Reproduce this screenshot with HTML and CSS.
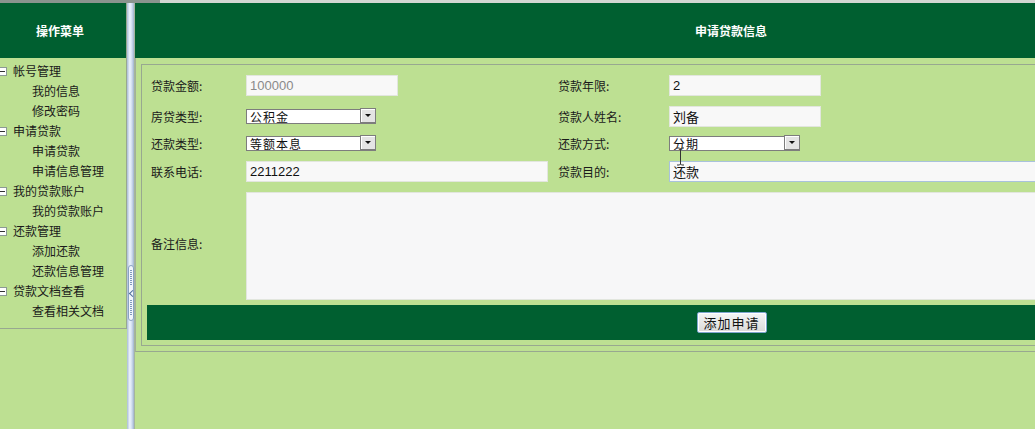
FILE: index.html
```html
<!DOCTYPE html>
<html lang="zh-CN">
<head>
    <meta charset="UTF-8">
    <title>申请贷款信息</title>
    <link rel="stylesheet" href="styles.css">
</head>
<body>
    <div class="topline"></div>
    <div class="frame">

        <!-- 左侧菜单 -->
        <div class="sidebar">
            <div class="side-box">
                <div class="side-head">操作菜单</div>
                <ul class="menu">
                    <li class="group"><span class="toggle"></span>帐号管理</li>
                    <li class="item">我的信息</li>
                    <li class="item">修改密码</li>
                    <li class="group"><span class="toggle"></span>申请贷款</li>
                    <li class="item">申请贷款</li>
                    <li class="item">申请信息管理</li>
                    <li class="group"><span class="toggle"></span>我的贷款账户</li>
                    <li class="item">我的贷款账户</li>
                    <li class="group"><span class="toggle"></span>还款管理</li>
                    <li class="item">添加还款</li>
                    <li class="item">还款信息管理</li>
                    <li class="group"><span class="toggle"></span>贷款文档查看</li>
                    <li class="item">查看相关文档</li>
                </ul>
            </div>
        </div>

        <!-- 分隔条 -->
        <div class="splitter">
            <div class="handle">
                <span class="dots"></span>
                <span class="chev"></span>
                <span class="dots"></span>
            </div>
        </div>

        <!-- 主区域 -->
        <div class="main">
            <div class="main-head">申请贷款信息</div>
            <div class="main-body">
                <form class="form">
                    <label>贷款金额:</label>
                    <div><input type="text" class="txt short muted" value="100000" readonly></div>
                    <label>贷款年限:</label>
                    <div><input type="text" class="txt short" value="2"></div>

                    <label>房贷类型:</label>
                    <div class="sel">
                        <select><option>公积金</option></select>
                        <span class="arrow"></span>
                    </div>
                    <label>贷款人姓名:</label>
                    <div><input type="text" class="txt short" value="刘备"></div>

                    <label>还款类型:</label>
                    <div class="sel">
                        <select><option>等额本息</option></select>
                        <span class="arrow"></span>
                    </div>
                    <label>还款方式:</label>
                    <div class="sel wide">
                        <select><option>分期</option></select>
                        <span class="arrow"></span>
                        <svg class="ibeam" width="9" height="19" viewBox="0 0 9 19">
                            <path d="M1 1h2.5l1 1 1-1H8M4.5 2v15M1 18h2.5l1-1 1 1H8" fill="none" stroke="#333" stroke-width="1"/>
                        </svg>
                    </div>

                    <label>联系电话:</label>
                    <div><input type="text" class="txt phone" value="2211222"></div>
                    <label>贷款目的:</label>
                    <div><input type="text" class="txt full focus" value="还款"></div>

                    <label class="note-label">备注信息:</label>
                    <textarea class="note"></textarea>

                    <div class="bar">
                        <button type="button">添加申请</button>
                    </div>
                </form>
            </div>
        </div>

    </div>
</body>
</html>
```
FILE: styles.css
```css
* {
    box-sizing: border-box;
}
body {
    margin: 0;
    background: #bde092;
    font-family: "Noto Sans CJK SC", "Liberation Sans", sans-serif;
    font-size: 12px;
    color: #1a1a1a;
    overflow: hidden;
}
.topline {
    height: 3px;
    background: linear-gradient(to right, #8a948e 0, #8a948e 160px, #d2d6d2 160px);
}
.frame {
    display: flex;
    height: 426px;
}

/* 左侧菜单 */
.sidebar {
    width: 127px;
    flex-shrink: 0;
}
.side-box {
    border-right: 1px solid #98a890;
    border-bottom: 1px solid #98a890;
}
.side-head {
    height: 55px;
    background: #005f30;
    color: #fff;
    font-weight: bold;
    display: flex;
    align-items: center;
    justify-content: center;
    padding-right: 6px;
}
.menu {
    list-style: none;
    margin: 0;
    padding: 3px 0 7px;
    overflow: hidden;
}
.menu li {
    height: 20px;
    line-height: 20px;
    white-space: nowrap;
}
.menu .group {
    display: flex;
    align-items: center;
}
.menu .item {
    padding-left: 32px;
}
.toggle {
    width: 9px;
    height: 9px;
    margin: 0 6px 0 -2px;
    border: 1px solid #8c9a94;
    background: #fff;
    position: relative;
}
.toggle::after {
    content: "";
    position: absolute;
    left: 1px;
    right: 1px;
    top: 3px;
    height: 1px;
    background: #333;
}

/* 分隔条 */
.splitter {
    width: 8px;
    flex-shrink: 0;
    background: linear-gradient(to right, #a9bcd6, #eef4fd 40%, #cfdcf0 70%, #9fb2cc);
    border-right: 1px solid #a6b59c;
    position: relative;
}
.handle {
    position: absolute;
    left: 1px;
    top: 262px;
    width: 6px;
    height: 56px;
    border: 1px solid #8aa2c4;
    border-radius: 3px;
    background: #f2f6fc;
    display: flex;
    flex-direction: column;
    align-items: center;
    justify-content: space-between;
    padding: 4px 0;
}
.dots {
    width: 2px;
    height: 16px;
    background: repeating-linear-gradient(#7f98bd 0 1px, transparent 1px 2px);
}
.chev {
    width: 5px;
    height: 5px;
    border-left: 1px solid #4d6d9a;
    border-bottom: 1px solid #4d6d9a;
    transform: rotate(45deg);
    margin-left: 2px;
}

/* 主区域 */
.main {
    width: 1192px;
    flex-shrink: 0;
}
.main-head {
    height: 55px;
    background: #005f30;
    color: #fff;
    font-weight: bold;
    display: flex;
    align-items: center;
    justify-content: center;
}
.main-body {
    border-left: 1px solid #a2b09a;
    border-bottom: 1px solid #98a890;
    padding: 6px 5px 5px 5px;
}
.form {
    margin: 0;
    border: 1px solid #98a890;
    padding: 5px 5px 5px 5px;
    display: grid;
    grid-template-columns: 99px 308px 115px 1fr;
    grid-template-rows: 31px 30px 24px 32px 113px 40px;
    align-items: center;
}
.form label {
    padding-left: 4px;
    font-size: 12px;
}
.txt {
    display: block;
    height: 21px;
    border: 1px solid #e2e6de;
    background: #f8f8f8;
    font-family: "Liberation Sans", "Noto Sans CJK SC", sans-serif;
    font-size: 13px;
    color: #111;
    padding: 0 3px;
    outline: none;
}
.txt.short {
    width: 152px;
}
.txt.phone {
    width: 302px;
}
.txt.full {
    width: 100%;
}
.txt.muted {
    color: #8a8a8a;
}
.txt.focus {
    border-color: #a9c2dc;
}

/* 下拉框 */
.sel {
    position: relative;
    width: 130px;
    height: 15px;
    margin-top: -2px;
}
.sel.wide {
    width: 131px;
}
.sel select {
    appearance: none;
    -webkit-appearance: none;
    width: 100%;
    height: 15px;
    border: 1px solid #7d7d7d;
    border-right: none;
    background: #fff;
    font-family: "Noto Sans CJK SC", sans-serif;
    font-size: 12px;
    letter-spacing: 1px;
    line-height: 13px;
    padding: 0 0 0 3px;
    color: #111;
    border-radius: 0;
    outline: none;
}
.arrow {
    position: absolute;
    right: 0;
    top: 0;
    width: 16px;
    height: 15px;
    background: #e4e4e4;
    border: 1px solid #7d7d7d;
    box-shadow: inset 1px 1px 0 #fff;
}
.arrow::after {
    content: "";
    position: absolute;
    left: 4px;
    top: 5px;
    border-left: 3px solid transparent;
    border-right: 3px solid transparent;
    border-top: 3px solid #111;
}
.ibeam {
    position: absolute;
    left: 7px;
    top: 12px;
}

/* 备注 */
.note-label {
    grid-column: 1;
}
.note {
    grid-column: 2 / -1;
    align-self: start;
    margin-top: 5px;
    height: 108px;
    border: 1px solid #e2e6de;
    background: #f7f7f8;
    resize: none;
    outline: none;
}
.bar {
    grid-column: 1 / -1;
    align-self: end;
    height: 35px;
    background: #005f30;
    display: flex;
    align-items: center;
    justify-content: center;
}
.bar button {
    width: 70px;
    height: 21px;
    border: 1px solid #7fa6d0;
    border-radius: 2px;
    background: linear-gradient(#f6f6f6, #d9d9d9);
    box-shadow: inset 0 0 0 1px #fff;
    font-family: "Noto Sans CJK SC", sans-serif;
    font-size: 13px;
    letter-spacing: 1px;
    color: #111;
    padding: 0;
    cursor: pointer;
}
```
